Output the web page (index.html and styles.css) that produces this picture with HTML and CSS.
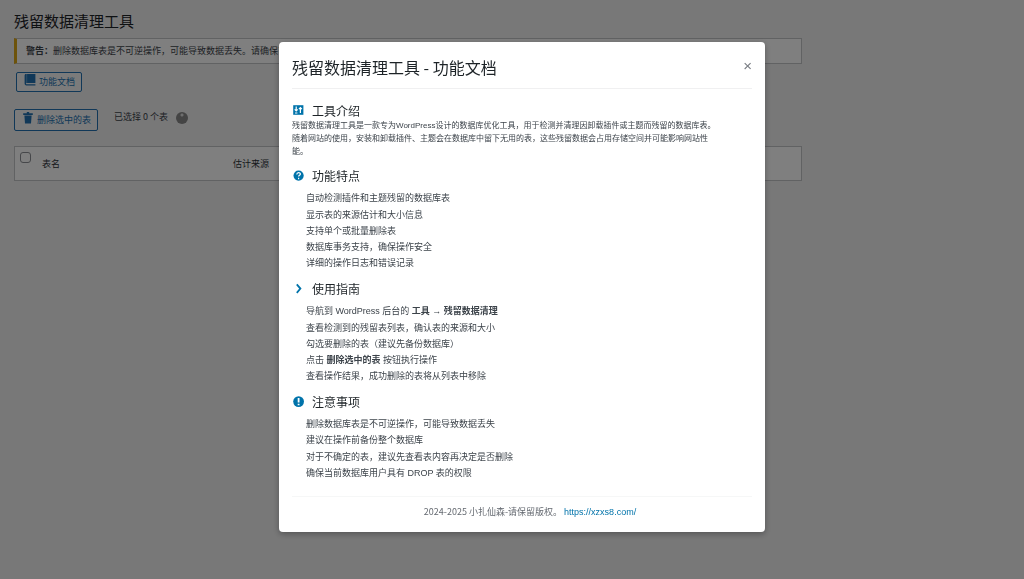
FILE: index.html
```
<!DOCTYPE html>
<html lang="zh-CN">
<head>
    <meta charset="UTF-8">
    <title>残留数据清理工具</title>
    <link rel="stylesheet" href="styles.css">
</head>
<body>
    <div class="wrap">
        <h1>残留数据清理工具</h1>
        <div class="notice"><strong>警告&#65306;</strong>删除数据库表是不可逆操作&#65292;可能导致数据丢失。请确保了解操作风险。</div>

        <button type="button" class="button docs-button">
            <svg class="icon" viewBox="0 0 20 20"><path d="M3 0h16v15H4c-1 0-1 2 0 2h15v2H4c-2 0-3-1-3-3V3c0-2 1-3 2-3z"/><path class="book-line" d="M4.500 0v15"/></svg>
            功能文档
        </button>

        <div class="actions">
            <button type="button" class="button">
                <svg class="icon" viewBox="0 0 20 20"><path d="M8 2V0h4v2h6v3H2V2zM4 6h12l-1 13H5z"/></svg>
                删除选中的表
            </button>
            <span class="selected-count">已选择 0 个表</span>
            <span class="spinner"></span>
        </div>

        <table class="table-list">
            <thead>
                <tr>
                    <td class="check-column"><input type="checkbox" aria-label="全选"></td>
                    <th class="name-column">表名</th>
                    <th>估计来源</th>
                </tr>
            </thead>
        </table>
    </div>

    <div class="overlay">
        <div class="modal" role="dialog" aria-labelledby="modal-title">
            <div class="modal-header">
                <h2 id="modal-title">残留数据清理工具 - 功能文档</h2>
                <button type="button" class="close" aria-label="关闭">×</button>
            </div>

            <div class="modal-body">
                <section>
                    <h3><svg class="icon" viewBox="0 0 20 20"><path d="M2 2h17v16H2z"/><path class="cut" d="M7 4v7M4.500 9L7 11.500 9.500 9M14 15V6M11.500 8.500L14 6l2.500 2.500M5 15h4"/></svg>工具介绍</h3>
                    <p>残留数据清理工具是一款专为WordPress设计的数据库优化工具&#65292;用于检测并清理因卸载插件或主题而残留的数据库表。<br>随着网站的使用&#65292;安装和卸载插件、主题会在数据库中留下无用的表&#65292;这些残留数据会占用存储空间并可能影响网站性<br>能。</p>
                </section>

                <section>
                    <h3><svg class="icon" viewBox="0 0 20 20"><circle cx="11" cy="11" r="8.500"/><path class="cut" d="M8 9c0-4 6-4 6-.500 0 2-3 2-3 4M11 14.500V17"/></svg>功能特点</h3>
                    <ul>
                        <li>自动检测插件和主题残留的数据库表</li>
                        <li>显示表的来源估计和大小信息</li>
                        <li>支持单个或批量删除表</li>
                        <li>数据库事务支持&#65292;确保操作安全</li>
                        <li>详细的操作日志和错误记录</li>
                    </ul>
                </section>

                <section>
                    <h3><svg class="icon" viewBox="0 0 20 20"><path class="chevron" d="M8 4l6 7-6 7"/></svg>使用指南</h3>
                    <ol>
                        <li>导航到 WordPress 后台的 <strong>工具 → 残留数据清理</strong></li>
                        <li>查看检测到的残留表列表&#65292;确认表的来源和大小</li>
                        <li>勾选要删除的表&#65288;建议先备份数据库&#65289;</li>
                        <li>点击 <strong>删除选中的表</strong> 按钮执行操作</li>
                        <li>查看操作结果&#65292;成功删除的表将从列表中移除</li>
                    </ol>
                </section>

                <section>
                    <h3><svg class="icon" viewBox="0 0 20 20"><circle cx="11" cy="11" r="9"/><path class="cut mark" d="M11 5v7.500M11 14.500V17"/></svg>注意事项</h3>
                    <ul>
                        <li>删除数据库表是不可逆操作&#65292;可能导致数据丢失</li>
                        <li>建议在操作前备份整个数据库</li>
                        <li>对于不确定的表&#65292;建议先查看表内容再决定是否删除</li>
                        <li>确保当前数据库用户具有 DROP 表的权限</li>
                    </ul>
                </section>
            </div>

            <div class="modal-footer">2024-2025 小扎仙森-请保留版权。 <a href="https://xzxs8.com/">https://xzxs8.com/</a></div>
        </div>
    </div>
</body>
</html>
```
FILE: styles.css
```
* {
    box-sizing: border-box;
}
body {
    margin: 0;
    background: #f0f0f1;
    color: #3c434a;
    font-family: "Liberation Sans", "Noto Sans CJK SC", sans-serif;
    font-size: 9px;
}
h1, h2, h3 {
    margin: 0;
    color: #1d2327;
    font-weight: 400;
}
h2, .selected-count, .modal-footer {
    font-family: "Noto Sans CJK SC", sans-serif;
}
button, input {
    margin: 0;
    font-family: inherit;
}

/* page */
.wrap {
    max-width: 816px;
    padding: 11px 14px;
}
h1 {
    font-size: 15px;
    line-height: 22px;
}
.notice {
    margin: 5px 0 8px;
    padding: 0 9px;
    background: #fff;
    border: 1px solid #c3c4c7;
    border-left: 3px solid #dba617;
    line-height: 24px;
    white-space: nowrap;
    overflow: hidden;
}
.icon {
    width: 12px;
    height: 12px;
    fill: currentColor;
}
.button {
    display: flex;
    gap: 3px;
    padding: 0 6px 0 7px;
    color: #2271b1;
    background: #f6f7f7;
    border: 1px solid #2271b1;
    border-radius: 2px;
    font-size: 9px;
    line-height: 20px;
}
.button .icon {
    margin-top: 2px;
}
.docs-button {
    margin-left: 2px;
    line-height: 18px;
}
.docs-button .icon {
    margin-top: 1px;
}
.book-line {
    stroke: #f6f7f7;
    stroke-opacity: 0.5;
    fill: none;
}
.actions {
    display: flex;
    margin: 17px 0 15px;
}
.selected-count {
    margin-left: 16px;
    line-height: 16px;
}
.spinner {
    width: 12px;
    height: 12px;
    margin: 3px 0 0 8px;
    border-radius: 50%;
    background: radial-gradient(circle at 50% 25%, #ddd 0 1px, #888 2px);
}
.table-list {
    width: 100%;
    background: #fff;
    border: 1px solid #c3c4c7;
    border-spacing: 0;
    color: #2c3338;
}
.table-list th, .table-list td {
    height: 33px;
    padding: 0;
    font-weight: 400;
    text-align: left;
}
.table-list .check-column {
    width: 27px;
    padding: 5px;
    vertical-align: top;
}
.name-column {
    width: 191px;
}
.check-column input {
    display: block;
    width: 11px;
    height: 11px;
    appearance: none;
    background: #fff;
    border: 1px solid #8c8f94;
    border-radius: 3px;
}

/* documentation modal */
.overlay {
    position: fixed;
    inset: 0;
    display: flex;
    justify-content: center;
    align-items: flex-start;
    padding: 42px 0 0 20px;
    background: rgba(0, 0, 0, 0.5);
    overflow: auto;
}
.modal {
    width: 90%;
    max-width: 486px;
    padding: 13px;
    background: #fff;
    border-radius: 4px;
    box-shadow: 0 2px 6px rgba(0, 0, 0, 0.3);
}
.modal-header {
    display: flex;
    justify-content: space-between;
    align-items: flex-start;
    padding-bottom: 8px;
    border-bottom: 1px solid #f0f0f1;
}
h2 {
    font-size: 16px;
    line-height: 25px;
}
.close {
    padding: 0;
    color: #787c82;
    background: none;
    border: none;
    font-size: 15px;
    line-height: 22px;
}
.modal-body {
    padding-top: 15px;
}
section {
    margin-bottom: 11px;
}
h3 {
    display: flex;
    gap: 8px;
    font-size: 12px;
    line-height: 16px;
}
h3 .icon {
    color: #0073aa;
}
.cut, .chevron {
    fill: none;
    stroke: #fff;
    stroke-width: 2;
}
.chevron {
    stroke: #0073aa;
    stroke-width: 3;
}
.mark {
    stroke-width: 3;
}
p {
    margin: 0;
    font-size: 8px;
    line-height: 1.6;
}
ul, ol {
    margin: 5px 0 0;
    padding: 0 0 0 14px;
    list-style: none;
    line-height: 1.8;
}
.modal-footer {
    margin-top: 15px;
    padding: 8px 0 0 16px;
    border-top: 1px solid #f6f7f7;
    color: #646970;
    line-height: 13px;
    text-align: center;
}
.modal-footer a {
    color: #0073aa;
    font-family: "Liberation Sans", sans-serif;
    text-decoration: none;
}
```
